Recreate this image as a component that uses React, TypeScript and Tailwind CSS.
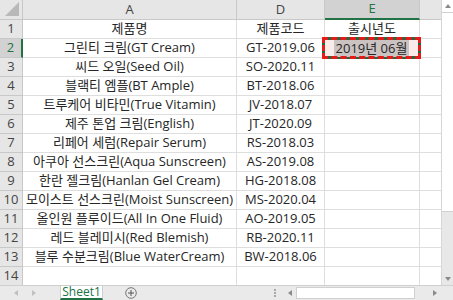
import React from "react";

const rows: [string, string, string][] = [
  ["제품명", "제품코드", "출시년도"],
  ["그린티 크림(GT Cream)", "GT-2019.06", "2019년 06월"],
  ["씨드 오일(Seed Oil)", "SO-2020.11", ""],
  ["블랙티 엠플(BT Ample)", "BT-2018.06", ""],
  ["트루케어 비타민(True Vitamin)", "JV-2018.07", ""],
  ["제주 톤업 크림(English)", "JT-2020.09", ""],
  ["리페어 세럼(Repair Serum)", "RS-2018.03", ""],
  ["아쿠아 선스크린(Aqua Sunscreen)", "AS-2019.08", ""],
  ["한란 젤크림(Hanlan Gel Cream)", "HG-2018.08", ""],
  ["모이스트 선스크린(Moist Sunscreen)", "MS-2020.04", ""],
  ["올인원 플루이드(All In One Fluid)", "AO-2019.05", ""],
  ["레드 블레미시(Red Blemish)", "RB-2020.11", ""],
  ["블루 수분크림(Blue WaterCream)", "BW-2018.06", ""],
  ["", "", ""],
];

const font = { fontFamily: '"Open Sans", "Noto Sans CJK KR", sans-serif' };

export default function App() {
  return (
    <div className="w-[453px] h-[300px] overflow-hidden bg-white flex flex-col text-[13px] text-[#262626]" style={font}>
      <div className="flex h-[285px]">
        <div className="w-[441px] h-[285px] overflow-hidden">
          <div className="grid grid-cols-[23px_214px_88px_95px_21px] grid-rows-[20px_repeat(14,19px)]">
            <div className="relative bg-[#e6e6e6] border-r border-b border-[#c8c8c8]">
              <svg className="absolute right-[3px] bottom-[3px]" width="14" height="14" viewBox="0 0 14 14">
                <polygon points="14,0 14,14 0,14" fill="#b9b9b9" />
              </svg>
            </div>
            <div className="bg-[#e6e6e6] border-r border-b border-[#c8c8c8] flex items-center justify-center text-[#444]">A</div>
            <div className="bg-[#e6e6e6] border-r border-b border-[#c8c8c8] flex items-center justify-center text-[#444]">D</div>
            <div className="bg-[#d2d2d2] border-r border-[#c8c8c8] border-b-2 border-b-[#217346] flex items-center justify-center text-[#217346]">E</div>
            <div className="bg-[#e6e6e6] border-b border-[#c8c8c8]"></div>
            {rows.map((r, i) => {
              const n = i + 1;
              const sel = n === 2;
              return (
                <React.Fragment key={n}>
                  <div
                    className={
                      sel
                        ? "bg-[#d2d2d2] border-r-2 border-r-[#217346] border-b border-b-[#c8c8c8] flex items-center justify-center text-[#217346]"
                        : "bg-[#e6e6e6] border-r border-b border-[#c8c8c8] flex items-center justify-center text-[#444]"
                    }
                  >
                    {n}
                  </div>
                  <div className="border-r border-b border-[#dedede] flex items-center justify-center whitespace-nowrap overflow-hidden">{r[0]}</div>
                  <div className="border-r border-b border-[#dedede] flex items-center justify-center whitespace-nowrap">{r[1]}</div>
                  {sel ? (
                    <div className="relative border-r border-b border-[#dedede]">
                      <div className="absolute left-[-3px] top-[-2px] right-[-2px] bottom-[-2px] bg-[#fbeaea] border-[3px] border-[#1e6b3f] flex items-center justify-center">
                        <span className="bg-[#cbc2c2] px-[2px] leading-[17px]">{r[2]}</span>
                      </div>
                      <div className="absolute left-[-3px] top-[-2px] right-[-2px] bottom-[-2px] border-[3px] border-dashed border-[#e61a1a]"></div>
                    </div>
                  ) : (
                    <div className="border-r border-b border-[#dedede] flex items-center justify-center">{r[2]}</div>
                  )}
                  <div className="border-b border-[#dedede]"></div>
                </React.Fragment>
              );
            })}
          </div>
        </div>
        <div className="w-[12px] h-[285px] bg-[#e8e8e8] border-l border-[#d6d6d6] flex flex-col">
          <div className="h-[12px] bg-white flex items-center justify-center">
            <svg width="6" height="4" viewBox="0 0 6 4"><polygon points="3,0 6,4 0,4" fill="#8a8a8a" /></svg>
          </div>
          <div className="h-[200px] bg-white border-y border-[#d0d0d0]"></div>
          <div className="flex-1"></div>
          <div className="h-[12px] flex items-center justify-center">
            <svg width="6" height="4" viewBox="0 0 6 4"><polygon points="0,0 6,0 3,4" fill="#8a8a8a" /></svg>
          </div>
        </div>
      </div>
      <div className="h-[15px] bg-[#eaeaea] border-t border-[#cfcfcf] flex items-stretch text-[12px]">
        <div className="w-[60px] flex items-center">
          <svg className="ml-[14px]" width="4" height="6" viewBox="0 0 4 6"><polygon points="4,0 4,6 0,3" fill="#c0c0c0" /></svg>
          <svg className="ml-[14px]" width="4" height="6" viewBox="0 0 4 6"><polygon points="0,0 4,3 0,6" fill="#c0c0c0" /></svg>
        </div>
        <div className="w-[43px] bg-white border-x border-[#cfcfcf] border-b-2 border-b-[#217346] flex items-center justify-center text-[#217346] leading-none">Sheet1</div>
        <div className="w-[56px] flex items-center justify-center">
          <svg width="12" height="12" viewBox="0 0 12 12">
            <circle cx="6" cy="6" r="5.3" fill="none" stroke="#777" strokeWidth="1" />
            <path d="M6 3v6M3 6h6" stroke="#555" strokeWidth="1" />
          </svg>
        </div>
        <div className="flex-1"></div>
        <div className="w-[14px] flex flex-col items-center justify-center gap-[1px]">
          <div className="w-[2px] h-[2px] bg-[#a8a8a8]"></div>
          <div className="w-[2px] h-[2px] bg-[#a8a8a8]"></div>
          <div className="w-[2px] h-[2px] bg-[#a8a8a8]"></div>
        </div>
        <div className="w-[157px] flex items-center ml-[2px] mr-[12px]">
          <div className="w-[12px] h-full flex items-center justify-center">
            <svg width="4" height="6" viewBox="0 0 4 6"><polygon points="4,0 4,6 0,3" fill="#8a8a8a" /></svg>
          </div>
          <div className="w-[119px] h-[12px] bg-white border border-[#d0d0d0]"></div>
          <div className="flex-1"></div>
          <div className="w-[12px] h-full flex items-center justify-center">
            <svg width="4" height="6" viewBox="0 0 4 6"><polygon points="0,0 4,3 0,6" fill="#8a8a8a" /></svg>
          </div>
        </div>
      </div>
    </div>
  );
}
